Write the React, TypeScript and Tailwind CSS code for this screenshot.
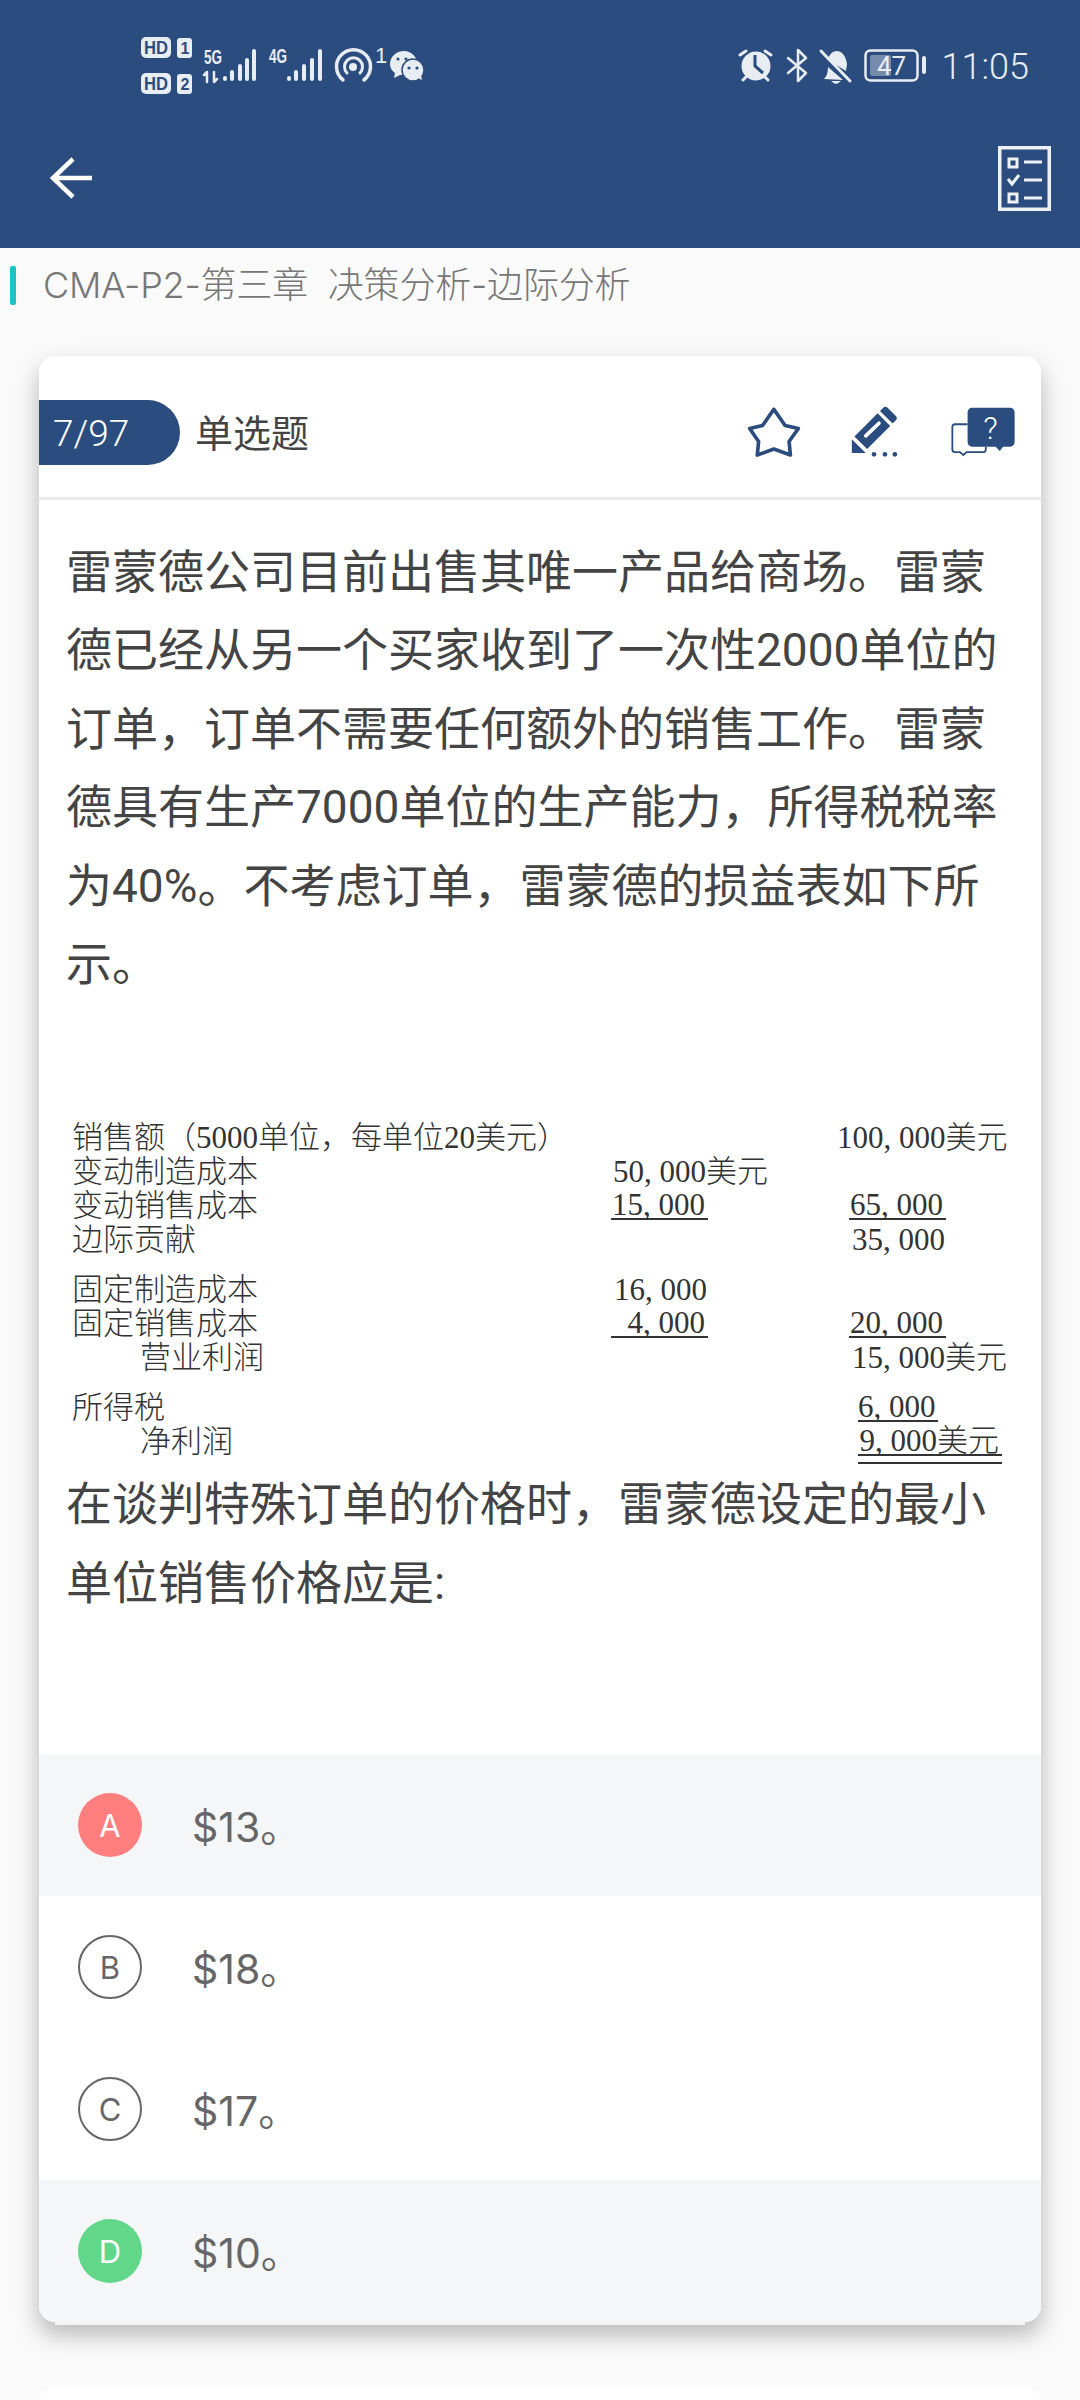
import React from "react";

const NAVY = "#2b4c7e";
const ICON = "#e8ecf3";

function StatusLeft() {
  return (
    <svg width="290" height="60" viewBox="136 36 290 60" className="shrink-0">
      <g fill={ICON}>
        <rect x="141" y="37" width="30" height="21" rx="5" />
        <rect x="177" y="38" width="15" height="20" rx="3" />
        <rect x="141" y="73" width="30" height="21" rx="5" />
        <rect x="177" y="74" width="15" height="20" rx="3" />
      </g>
      <g fill={NAVY} fontFamily="Liberation Sans" fontWeight="700">
        <text x="144" y="54" fontSize="18" textLength="24" lengthAdjust="spacingAndGlyphs">HD</text>
        <text x="144" y="90" fontSize="18" textLength="24" lengthAdjust="spacingAndGlyphs">HD</text>
        <text x="180.500" y="54" fontSize="16">1</text>
        <text x="180.500" y="90" fontSize="16">2</text>
      </g>
      <g fill={ICON} fontFamily="Liberation Sans" fontWeight="700">
        <text x="204" y="64" fontSize="21" textLength="18" lengthAdjust="spacingAndGlyphs">5G</text>
        <text x="269" y="63" fontSize="21" textLength="18" lengthAdjust="spacingAndGlyphs">4G</text>
        <text x="375" y="63" fontSize="22" fontWeight="400">1</text>
      </g>
      <g stroke={ICON} strokeLinecap="round" fill="none">
        <path d="M207 82v-10M204 75l3-3M214 72v10M217 79l-3 3" strokeWidth="2.500" />
        <path d="M225 79v-1M232 79v-7M240 79v-13M247 79v-19M254 79v-28" strokeWidth="4" />
        <path d="M289 79v-1M296 79v-7M304 79v-13M312 79v-19M320 79v-28" strokeWidth="4" />
        <path d="M343 80a17 17 0 1 1 21 0" strokeWidth="3.500" />
        <path d="M347 73a9 9 0 1 1 13 0" strokeWidth="3" />
      </g>
      <circle cx="353" cy="67" r="4" fill={ICON} />
      <g fill={ICON}>
        <path d="M404 51c-8 0-14 6-14 13 0 4 2 7 5 9l-1 5 6-3 6 0 12-12c-2-7-7-12-14-12z" />
        <circle cx="413" cy="70" r="11" stroke={NAVY} strokeWidth="1.500" />
        <path d="M418 78l4 2-1-5z" />
      </g>
      <g fill={NAVY}>
        <circle cx="398" cy="59" r="1.600" />
        <circle cx="406" cy="59" r="1.600" />
        <circle cx="409" cy="68" r="1.600" />
        <circle cx="417" cy="68" r="1.600" />
      </g>
    </svg>
  );
}

function StatusRight() {
  return (
    <div className="flex items-center">
      <svg width="190" height="40" viewBox="738 46 190 40" className="shrink-0">
        <g fill="none" stroke={ICON} strokeLinecap="round">
          <path d="M741 55l6-4M772 55l-6-4M744 80l3-3M769 80l-3-3" strokeWidth="3" />
          <path d="M789 58l18 15-8 8V50l8 8-18 15" strokeWidth="2.500" strokeLinejoin="round" />
          <path d="M822 51l29 30" strokeWidth="3" />
          <rect x="866.500" y="50.500" width="52" height="30" rx="5" strokeWidth="2.500" />
          <path d="M925 58v14" strokeWidth="4" />
        </g>
        <circle cx="757" cy="66" r="14.500" fill={ICON} />
        <path d="M756 55v11l8 7" fill="none" stroke={NAVY} strokeWidth="3" />
        <path d="M829 60c1-6 5-9 9-9 7 1 9 7 10 13l-1 7zM825 79c3-3 4-7 4-12l15 13zM832 81h10l-2 1.500a4 4 0 0 1-6 0z" fill={ICON} />
        <rect x="871" y="55" width="21" height="21" rx="2" fill={ICON} opacity="0.4" />
        <text x="878" y="75" fontSize="26" fontFamily="Roboto" fill={ICON}>47</text>
      </svg>
      <span className="ml-[15px] pt-[2px] text-[36px] font-light leading-none text-[#e8ecf3]">11:05</span>
    </div>
  );
}

function Row({ mt, label, indent, c2, c3 }: { mt?: boolean; label: string; indent?: boolean; c2?: React.ReactNode; c3?: React.ReactNode }) {
  return (
    <div className={mt ? "mt-[16px] flex h-[34px] whitespace-nowrap" : "flex h-[34px] whitespace-nowrap"}>
      <div className={indent ? "w-[539px] pl-[68px]" : "w-[539px]"}>{label}</div>
      <div className="w-[238px]">{c2}</div>
      <div>{c3}</div>
    </div>
  );
}

function Ul({ children, w = "w-[97px]" }: { children: React.ReactNode; w?: string }) {
  return <div className={w + " h-[31px] border-b-2 border-[#333] pr-[3px] text-right leading-[32px]"}>{children}</div>;
}

function Option({ letter, text, shaded, color }: { letter: string; text: string; shaded?: boolean; color?: string }) {
  return (
    <div className={shaded ? "flex h-[142px] items-center bg-[#f5f6f8] pl-[39px]" : "flex h-[142px] items-center bg-white pl-[39px]"}>
      {color ? (
        <div className={color + " flex h-[64px] w-[64px] items-center justify-center rounded-full pt-[2px] font-['Inter',sans-serif] text-[31px] text-white"}>{letter}</div>
      ) : (
        <div className="flex h-[64px] w-[64px] items-center justify-center rounded-full border-2 border-[#666] pt-[2px] font-['Inter',sans-serif] text-[31px] text-[#666]">{letter}</div>
      )}
      <div className="ml-[50px] pt-[5px] font-['Inter','Noto_Sans_CJK_SC',sans-serif] text-[41px] text-[#666]">{text}</div>
    </div>
  );
}

export default function App() {
  return (
    <div className="h-[2400px] w-[1080px] overflow-hidden bg-[#fafafa] font-['Roboto','Noto_Sans_CJK_SC',sans-serif]">
      <header className="flex h-[248px] flex-col bg-[#2b4c7e]">
        <div className="flex h-[108px] items-center justify-between pl-[136px] pr-[51px] pt-[24px]">
          <StatusLeft />
          <StatusRight />
        </div>
        <div className="flex h-[140px] items-center justify-between pl-[50px] pr-[29px]">
          <svg width="42" height="42" viewBox="0 0 42 42" fill="none" stroke="#fff" strokeWidth="4.500">
            <path d="M42 21H4M23 2L3 21l20 19" />
          </svg>
          <svg width="53" height="65" viewBox="0 0 53 65" fill="none" stroke="#eef1f6" strokeWidth="3.500">
            <rect x="1.750" y="1.750" width="49.500" height="61.500" />
            <rect x="11" y="13" width="8" height="8" strokeWidth="3" />
            <rect x="11" y="48" width="8" height="8" strokeWidth="3" />
            <path d="M26 16h18M26 34h18M26 52h18" strokeWidth="3" />
            <path d="M10 33l4 5 7-9" strokeWidth="3" />
          </svg>
        </div>
      </header>

      <div className="flex h-[74px] items-center pl-[10px]">
        <div className="h-[39px] w-[6px] rounded-[2px] bg-[#19c3c6]" />
        <div className="ml-[27px] whitespace-pre font-['Inter','Noto_Sans_CJK_SC',sans-serif] text-[36px] font-light tracking-[-0.2px] text-[#777]">CMA-P2-第三章  决策分析-边际分析</div>
      </div>

      <main className="mx-[39px] mt-[34px]">
        <div className="overflow-hidden rounded-[16px] bg-white shadow-[0_12px_24px_rgba(0,0,0,0.28)]">
          <div className="flex h-[141px] items-center justify-between pr-[26px] pt-[12px]">
            <div className="flex items-center">
              <div className="flex h-[65px] w-[141px] items-center rounded-r-full bg-[#2b4c7e] pl-[14px] pt-[3px] text-[37px] font-light text-white">7/97</div>
              <div className="ml-[15px] pt-[3px] text-[38px] text-[#444]">单选题</div>
            </div>
            <div className="flex items-center">
              <svg width="57" height="53" viewBox="50 35 170 160" fill="none" stroke={NAVY} strokeWidth="11" strokeLinejoin="round">
                <path d="M133 45L167 94 207 103 179 142 183 183 133 165 83 183 87 142 60 103 99 94Z" />
              </svg>
              <svg width="50" height="53" viewBox="365 35 150 160" className="ml-[47px]">
                <path d="M370 135v42h42zM378 127l38 38 70-70-38-38zM455 50l38 38 10-10c4-4 4-9 0-13l-25-25c-4-4-9-4-13 0z" fill={NAVY} />
                <path d="M412 125l40-38" stroke="#fff" strokeWidth="11" fill="none" strokeLinecap="round" />
                <circle cx="437" cy="181" r="7" fill={NAVY} />
                <circle cx="470" cy="181" r="7" fill={NAVY} />
                <circle cx="500" cy="181" r="7" fill={NAVY} />
              </svg>
              <svg width="65" height="53" viewBox="660 35 196 160" className="ml-[50px]">
                <path d="M713 90h-38c-5 0-8 3-8 8v68c0 5 3 8 8 8h15l10 9 10-9h50c5 0 8-3 8-8v-8" fill="none" stroke={NAVY} strokeWidth="5.500" />
                <path d="M728 40h112c9 0 15 6 15 15v88c0 9-6 15-15 15h-20l-10 13-12-13h-70c-9 0-15-6-15-15V55c0-9 6-15 15-15z" fill={NAVY} />
                <text x="760" y="134" fontSize="96" fill="#fff" fontFamily="Roboto" fontWeight="300">?</text>
              </svg>
            </div>
          </div>
          <div className="h-[3px] bg-[#ebebeb]" />

          <div className="px-[27px] pt-[33px] text-[46px] leading-[78.400px] text-[#444]">
            雷蒙德公司目前出售其唯一产品给商场。雷蒙<br />
            德已经从另一个买家收到了一次性2000单位的<br />
            订单，订单不需要任何额外的销售工作。雷蒙<br />
            德具有生产7000单位的生产能力，所得税税率<br />
            为40%。不考虑订单，雷蒙德的损益表如下所<br />
            示。
          </div>

          <div className="mt-[118px] h-[344px] pl-[33px] font-['Liberation_Serif','Noto_Sans_CJK_SC',serif] text-[31px] font-light leading-[34px] text-[#333]">
            <Row label="销售额（5000单位，每单位20美元）" c3={<div className="ml-[-12px]">100, 000美元</div>} />
            <Row label="变动制造成本" c2={<div className="pl-[2px]">50, 000美元</div>} />
            <Row label="变动销售成本" c2={<Ul>15, 000</Ul>} c3={<Ul>65, 000</Ul>} />
            <Row label="边际贡献" c3={<div className="pl-[3px]">35, 000</div>} />
            <Row mt label="固定制造成本" c2={<div className="pl-[3px]">16, 000</div>} />
            <Row label="固定销售成本" c2={<Ul>4, 000</Ul>} c3={<Ul>20, 000</Ul>} />
            <Row label="营业利润" indent c3={<div className="pl-[3px]">15, 000美元</div>} />
            <Row mt label="所得税" c3={<div className="ml-[9px]"><Ul w="w-[80px]">6, 000</Ul></div>} />
            <Row
              label="净利润"
              indent
              c3={
                <div className="ml-[9px] w-[144px] border-b-2 border-[#333] pb-[6px]">
                  <Ul w="w-[144px]">9, 000美元</Ul>
                </div>
              }
            />
          </div>

          <div className="px-[27px] text-[46px] leading-[78.400px] text-[#444]">
            在谈判特殊订单的价格时，雷蒙德设定的最小<br />
            单位销售价格应是:
          </div>

          <div className="mt-[132px]">
            <Option letter="A" text="$13。" shaded color="bg-[#ff7f7f]" />
            <Option letter="B" text="$18。" />
            <Option letter="C" text="$17。" />
            <Option letter="D" text="$10。" shaded color="bg-[#62d78a]" />
          </div>
        </div>
        <div className="mx-[16px] h-[3px] bg-[#f3f3f3]" />
        <div className="mt-[62px] h-[40px] rounded-t-[16px] bg-white" />
      </main>
    </div>
  );
}
